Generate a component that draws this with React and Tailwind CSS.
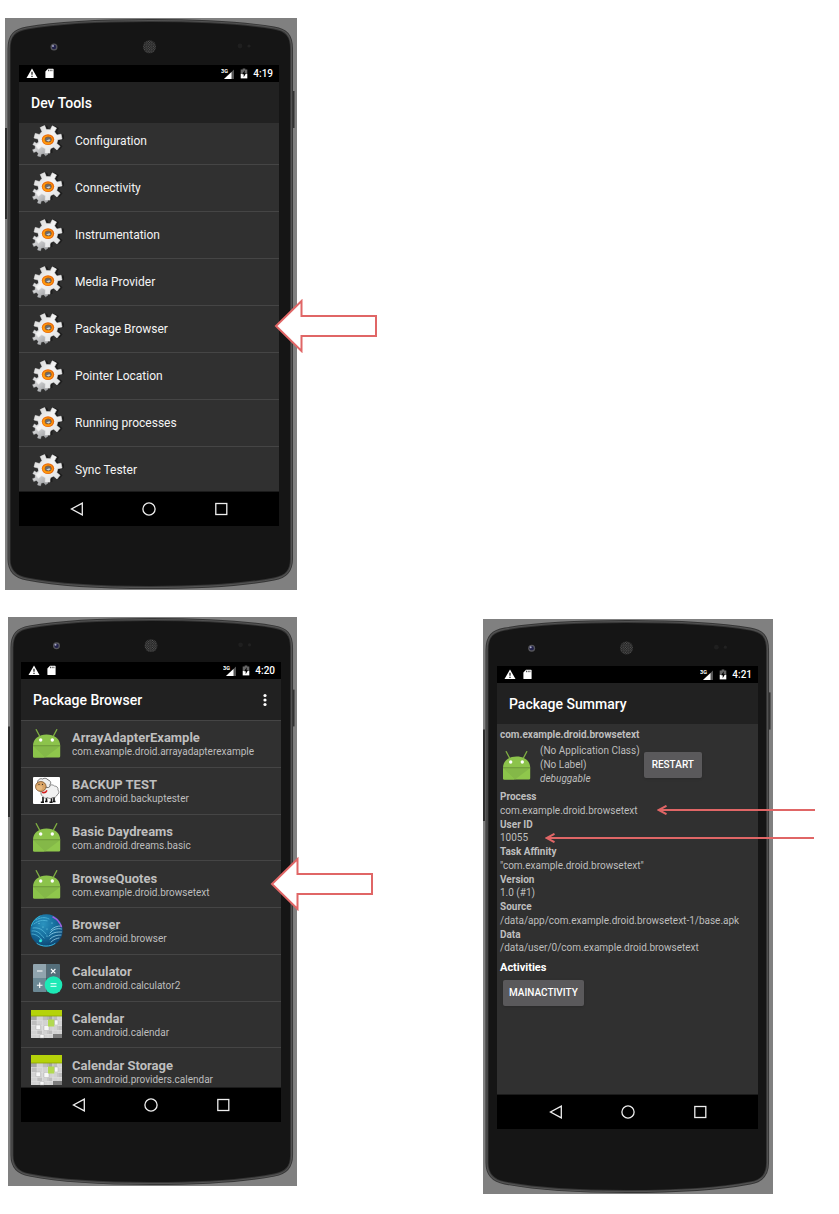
import React from 'react';

function gearPath(cx, cy, inner, outer, teeth, start) {
  const step = (Math.PI * 2) / teeth;
  const at = (r, a) => `${(cx + r * Math.cos(a)).toFixed(2)} ${(cy + r * Math.sin(a)).toFixed(2)}`;
  const parts = [];
  for (let i = 0; i < teeth; i += 1) {
    const a = start + i * step;
    parts.push(
      at(inner, a - step * 0.27),
      at(outer, a - step * 0.19),
      at(outer, a + step * 0.19),
      at(inner, a + step * 0.27),
    );
  }
  return `M${parts.join('L')}Z`;
}

const FRONT_GEAR = gearPath(17, 14.2, 9.8, 14, 7, -1.09);
const BACK_GEAR = gearPath(10.5, 22.6, 6.5, 9.2, 7, -0.85);

function GearIcon() {
  return (
    <svg viewBox="0 0 33 33" className="size-[33px] shrink-0" aria-hidden="true">
      <defs>
        <linearGradient id="gear-front" x1="0" y1="0" x2="1" y2="1">
          <stop offset="0" stopColor="#d2d2d2" />
          <stop offset="0.45" stopColor="#f4f4f4" />
          <stop offset="1" stopColor="#dcdee0" />
        </linearGradient>
        <linearGradient id="gear-back" x1="0" y1="0" x2="1" y2="1">
          <stop offset="0" stopColor="#f0f0f0" />
          <stop offset="0.5" stopColor="#c4c5c7" />
          <stop offset="1" stopColor="#8d8f92" />
        </linearGradient>
      </defs>
      <path d={FRONT_GEAR} transform="translate(2.500 0)" fill="#141414" opacity="0.7" />
      <path d={BACK_GEAR} fill="url(#gear-back)" strokeLinejoin="round" stroke="#bcbdbf" strokeWidth="0.4" />
      <path d={FRONT_GEAR} fill="url(#gear-front)" stroke="#e6e6e6" strokeWidth="0.6" strokeLinejoin="round" />
      <ellipse cx="17" cy="14.6" rx="6.200" ry="5.400" fill="#e8690a" />
      <ellipse cx="16.700" cy="14.800" rx="5.200" ry="4.400" fill="#ff980c" />
      <ellipse cx="17.200" cy="14.400" rx="3.500" ry="2.900" fill="#a3581a" />
      <ellipse cx="17.200" cy="14.500" rx="2.900" ry="2.200" fill="#686d72" />
      <path d="M15.200 15.400l3.200-1.200 1.200 1-2 1.200z" fill="#cfd5d8" />
    </svg>
  );
}

function AndroidIcon() {
  return (
    <svg viewBox="0 0 33 33" className="size-[33px] shrink-0" aria-hidden="true">
      <path d="M6.2 2.600l3.200 6M26.800 2.600l-3.200 6" stroke="#7fae42" strokeWidth="1.200" strokeLinecap="round" />
      <path d="M3 18.800C3 11.500 9 7.500 16.500 7.500S30.200 11.500 30.200 18.800z" fill="#8cc34b" />
      <path d="M3 18.800h27.200v10.400a1.300 1.300 0 0 1-1.300 1.300H4.300A1.300 1.300 0 0 1 3 29.200z" fill="#8fc74c" />
      <path d="M3 19l11.500 11.500H4.300A1.300 1.300 0 0 1 3 29.200z" fill="#8bc34a" />
      <path d="M3 19h27.200L15 30.500z" fill="#84b848" />
      <path d="M3 18.800h27.200" stroke="#6f9c3b" strokeWidth="0.900" />
      <circle cx="10.700" cy="13" r="1.700" fill="#fff" />
      <circle cx="22.300" cy="13" r="1.700" fill="#fff" />
    </svg>
  );
}

function SheepIcon() {
  return (
    <svg viewBox="0 0 33 33" className="size-[33px] shrink-0" aria-hidden="true">
      <rect x="3" y="3" width="27" height="27" rx="1" fill="#fff" />
      <path d="M13 23v5M16.500 23v4.500M21.500 23v5M24 22v5.500" stroke="#111" strokeWidth="1.600" />
      <path d="M10.800 28.300h3.200M15 27.600h2.500M19.500 28.300h3.200M23 27.600h2.500" stroke="#111" strokeWidth="1.500" />
      <path
        d="M12 15c-2 4-1 6.500 1.500 8 1 1.500 3 1.500 4 .5 1.500 1.300 4 1.300 5 0 2.500.5 4-1 4.500-2.500 2-1 2.500-3.500 1-5 .5-2.500-1.500-4-3.500-4-1.500-1.500-4-1.500-5-.5z"
        fill="#f1f1f1"
        stroke="#666"
        strokeWidth="0.700"
      />
      <path d="M7.500 8.500c0-3 3-4.500 5-3.500 2-1.500 5-.5 5.500 1 2.500.5 3.500 3 2 4.500.5 2-1 3.500-3 3z" fill="#efefef" stroke="#444" strokeWidth="0.700" />
      <ellipse cx="10.800" cy="12.500" rx="5.300" ry="5" fill="#d9a365" stroke="#6b4520" strokeWidth="0.700" />
      <ellipse cx="9.500" cy="13.800" rx="3" ry="2.300" fill="#e6b87e" />
      <circle cx="9" cy="10.300" r="0.600" fill="#222" />
      <circle cx="12.500" cy="10.300" r="0.600" fill="#222" />
      <path d="M12 18.300c2 .8 4 0 5-2" stroke="#d62020" strokeWidth="1.600" fill="none" />
    </svg>
  );
}

function GlobeIcon() {
  return (
    <svg viewBox="0 0 33 33" className="size-[33px] shrink-0" aria-hidden="true">
      <defs>
        <radialGradient id="globe-fill" cx="0.400" cy="0.300" r="0.700">
          <stop offset="0" stopColor="#2b93bf" />
          <stop offset="0.550" stopColor="#156c9c" />
          <stop offset="1" stopColor="#0e4673" />
        </radialGradient>
      </defs>
      <circle cx="16.500" cy="16.500" r="16.200" fill="url(#globe-fill)" />
      <g fill="none" strokeWidth="0.700" strokeLinecap="round">
        <path d="M6 6c5-3 9-3 13-1M4 10c5-4 9-4 14-3" stroke="#5fc4e4" strokeDasharray="1.500 1" />
        <path d="M20 19c3-4 7-5 11.500-4M19 22c4-4 8-4 12.500-4M20 25c3-3 7-4 11-4M21 28c3-3 6-3.500 8-4M21 16c3-3 6-4 10-4" stroke="#a6e0f4" />
        <path d="M2 17c5-1 9 3 12 7M2 20c4 0 8 3 10 6M3 14c6-1 10 2 13 6" stroke="#62c4e4" />
        <path d="M23 3c4 2 7 5.500 8.500 10" stroke="#a85be0" strokeWidth="1.500" strokeDasharray="2.500 1" />
        <path d="M10 2c-4 2-7 5-8.500 9.500" stroke="#38d0ee" />
        <path d="M7 29.500c5 3.500 13 3.500 18 0" stroke="#38b6dc" strokeWidth="1" />
      </g>
      <g fill="#8fe6f4">
        <circle cx="10.500" cy="26.700" r="1.500" fill="#2ff0dc" />
        <circle cx="13" cy="13" r="0.500" />
        <circle cx="17" cy="15" r="0.500" />
        <circle cx="17" cy="22" r="0.600" />
        <circle cx="22" cy="9" r="0.600" />
        <circle cx="9" cy="9.500" r="0.500" />
      </g>
    </svg>
  );
}

function CalculatorIcon() {
  return (
    <svg viewBox="0 0 33 33" className="size-[33px] shrink-0" aria-hidden="true">
      <path d="M4 3h12.500v14H3V4a1 1 0 0 1 1-1z" fill="#90a4ae" />
      <path d="M16.500 3H29a1 1 0 0 1 1 1v13H16.500z" fill="#546e7a" />
      <path d="M3 17h13.500v14H4a1 1 0 0 1-1-1z" fill="#6b8894" />
      <path d="M16.500 17H30v13a1 1 0 0 1-1 1H16.500z" fill="#455a64" />
      <path d="M7 10h5.500M21 8l4.400 4.400M25.400 8L21 12.400M9.700 21.500v5.600M6.900 24.300h5.600" stroke="#fff" strokeWidth="1.100" />
      <circle cx="23.500" cy="24" r="8.800" fill="#1de9b6" />
      <path d="M20.500 22.700h6M20.500 25.300h6" stroke="#c7fff0" strokeWidth="1.200" />
    </svg>
  );
}

function CalendarIcon({ tall }) {
  const top = tall ? 0 : 2;
  const head = tall ? 8 : 6;
  return (
    <svg viewBox="0 0 33 33" className="size-[33px] shrink-0" aria-hidden="true">
      <rect x="1" y={top} width="31" height={30 - top} fill="#d2d2d2" />
      <path d="M2 12h5v5H2zM12 8h5v5h-5zM22 8h5v5h-5zM7 22h5v4H7zM17 22h5v4h-5zM27 18h5v4h-5z" fill="#bdbdbd" />
      <path d="M1 8h6v4H1zM17 8h5v4h-5z" fill="#a6a6a6" />
      <path d="M1 12.500h31M1 17.500h31M1 22.500h31M1 26.500h31M7 8v22M12.500 8v22M18 8v22M23 8v22M28 8v22" stroke="#e2e2e2" strokeWidth="0.500" />
      <path d="M23 26h9v4h-9z" fill="#7c7c7c" />
      <rect x="1" y={top} width="31" height={head} fill="#b5d20a" />
      <path d={`M1 ${top + head}h31`} stroke="#8aa300" strokeWidth="0.800" />
      <path d="M6 17h4.500v4.500H6zM24.500 12h3.500v5h-3.500zM14 17.500h5v5h-5zM10 26.500h4v3.500h-4z" fill="#f7f7f7" stroke="#a5a5a5" strokeWidth="0.400" />
      <rect x="18" y="11.500" width="6.300" height="7" fill="#b2d951" />
    </svg>
  );
}

function StatusBar({ time }) {
  return (
    <div className="flex h-[17px] items-center justify-between bg-black pl-[7px] pr-1.5 text-white">
      <div className="flex items-center gap-[7px]">
        <svg viewBox="0 0 12 11" className="h-[11px] w-3" aria-hidden="true">
          <path d="M6 0.500L11.500 10H0.500z" fill="#fff" />
          <path d="M6 3.800v3M6 7.700v1.200" stroke="#000" strokeWidth="1.100" />
        </svg>
        <svg viewBox="0 0 9 11" className="h-[11px] w-[9px]" aria-hidden="true">
          <path d="M3 0.700h5a.6.6 0 0 1 .6.6v8.100a.6.6 0 0 1-.6.6H1a.6.6 0 0 1-.6-.6V3.400z" fill="#fff" />
          <path d="M3.500 1.700v1.500M5.200 1.700v1.500M6.900 1.700v1.500" stroke="#000" strokeWidth="0.700" />
        </svg>
      </div>
      <div className="flex items-center">
        <svg viewBox="0 0 14 12" className="h-3 w-3.5" aria-hidden="true">
          <path d="M13 1.500V11H3z" fill="#555" />
          <path d="M10.500 4V11H3z" fill="#fff" />
          <text x="0" y="5" fontSize="5.500" fontWeight="700" fill="#fff" fontFamily="Roboto, sans-serif">3G</text>
        </svg>
        <svg viewBox="0 0 8 11" className="ml-[5px] h-[11px] w-2" aria-hidden="true">
          <path d="M2.700 0.400h2.600v1h2v4.600H0.700V1.400h2z" fill="#666" />
          <path d="M0.700 6h6.600v4.400H0.700z" fill="#fff" />
          <path d="M4.700 2.200L2.200 6.200h1.500v3L6 5.200H4.600z" fill="#000" />
        </svg>
        <time className="ml-[5px] text-[10px] font-medium leading-4">{time}</time>
      </div>
    </div>
  );
}

function NavBar() {
  return (
    <nav className="flex h-[35px] items-center justify-center gap-[58px] border-t border-[#1b1b1b] bg-black" aria-label="System">
      <button type="button" aria-label="Back">
        <svg viewBox="0 0 14 14" className="block size-3.5">
          <path d="M12.300 1.200v11.600L1.500 7z" fill="none" stroke="#eee" strokeWidth="1.300" />
        </svg>
      </button>
      <button type="button" aria-label="Home">
        <svg viewBox="0 0 14 14" className="block size-3.5">
          <circle cx="7" cy="7" r="6.100" fill="none" stroke="#eee" strokeWidth="1.300" />
        </svg>
      </button>
      <button type="button" aria-label="Overview">
        <svg viewBox="0 0 14 14" className="block size-3.5">
          <rect x="1.800" y="1.500" width="11" height="11" fill="none" stroke="#eee" strokeWidth="1.300" />
        </svg>
      </button>
    </nav>
  );
}

const BODY =
  'M4 31C4 17 10 12 22 10C50 5 95 2.500 145 2.500S240 5 269 10C281 12 286.500 17 286.500 31V541C286.500 553 281 559 269 561C240 566.500 195 569.500 145 569.500S50 566.500 22 561C10 559 4 553 4 541Z';

function Bezel() {
  return (
    <svg
      viewBox="0 0 292 572"
      preserveAspectRatio="none"
      className="absolute inset-0 -z-10 size-full"
      aria-hidden="true"
    >
      <defs>
        <pattern id="grille" width="2.400" height="2.400" patternUnits="userSpaceOnUse">
          <rect width="2.400" height="2.400" fill="#1c1c1c" />
          <circle cx="0.600" cy="0.600" r="0.550" fill="#6a6a6a" />
          <circle cx="1.800" cy="1.800" r="0.550" fill="#6a6a6a" />
        </pattern>
      </defs>
      <path d="M0 110h2v91H0z" fill="#2e2e2e" />
      <path d="M287 73h2.500v37H287z" fill="#333" />
      <path d={BODY} fill="#151515" stroke="#363636" strokeWidth="3" />
      <path d={BODY} fill="none" stroke="#525252" strokeWidth="1.200" />
      <circle cx="49" cy="29" r="3.500" fill="#55555a" />
      <circle cx="49" cy="29" r="2.200" fill="#22224a" />
      <circle cx="48" cy="28" r="1" fill="#a9a9c8" />
      <circle cx="144.500" cy="28.800" r="6.500" fill="url(#grille)" />
      <circle cx="235" cy="28" r="2.400" fill="#1f1f1f" />
      <circle cx="244" cy="28" r="1.600" fill="#222" />
    </svg>
  );
}

function Phone({ className, title, time, action, children }) {
  return (
    <section className={`relative isolate shrink-0 bg-[#808080] ${className}`} aria-label={title}>
      <Bezel />
      <StatusBar time={time} />
      <header className="flex h-[41px] items-center justify-between bg-[#212121] pl-3 pr-2 text-white">
        <h2 className="text-[14px] font-medium leading-5">{title}</h2>
        {action}
      </header>
      {children}
      <NavBar />
    </section>
  );
}

function BlockArrow({ className }) {
  return (
    <svg viewBox="0 0 104 54" className={`absolute h-[54px] w-[104px] ${className}`} aria-hidden="true">
      <path d="M2 27L27.500 2V17H102V37H27.500V52Z" fill="#fff" stroke="#e06666" strokeWidth="2" />
    </svg>
  );
}

function LineArrow({ className }) {
  return (
    <div className={`absolute flex items-center ${className}`} aria-hidden="true">
      <svg viewBox="0 0 10 10" className="size-2.5 shrink-0">
        <path d="M9.500 0.800L1.500 5l8 4.200M1.500 5H10" fill="none" stroke="#e06666" strokeWidth="2" />
      </svg>
      <span className="h-0.5 flex-1 bg-[#e06666]" />
    </div>
  );
}

const TOOLS = [
  'Configuration',
  'Connectivity',
  'Instrumentation',
  'Media Provider',
  'Package Browser',
  'Pointer Location',
  'Running processes',
  'Sync Tester',
];

const PACKAGES = [
  { name: 'ArrayAdapterExample', id: 'com.example.droid.arrayadapterexample', icon: <AndroidIcon /> },
  { name: 'BACKUP TEST', id: 'com.android.backuptester', icon: <SheepIcon /> },
  { name: 'Basic Daydreams', id: 'com.android.dreams.basic', icon: <AndroidIcon /> },
  { name: 'BrowseQuotes', id: 'com.example.droid.browsetext', icon: <AndroidIcon /> },
  { name: 'Browser', id: 'com.android.browser', icon: <GlobeIcon /> },
  { name: 'Calculator', id: 'com.android.calculator2', icon: <CalculatorIcon /> },
  { name: 'Calendar', id: 'com.android.calendar', icon: <CalendarIcon /> },
  { name: 'Calendar Storage', id: 'com.android.providers.calendar', icon: <CalendarIcon tall /> },
];

const DETAILS = [
  ['Process', 'com.example.droid.browsetext'],
  ['User ID', '10055'],
  ['Task Affinity', '"com.example.droid.browsetext"'],
  ['Version', '1.0 (#1)'],
  ['Source', '/data/app/com.example.droid.browsetext-1/base.apk'],
  ['Data', '/data/user/0/com.example.droid.browsetext'],
];

function DevTools() {
  return (
    <div className="h-[368px] overflow-hidden bg-[#303030]">
      <ul className="-mt-[5px]">
        {TOOLS.map((tool) => (
          <li key={tool} className="border-b border-[#454545]">
            <button type="button" className="flex h-[46px] w-full items-center gap-[11px] pl-3 text-left text-[12px] text-[#f4f4f4]">
              <GearIcon />
              {tool}
            </button>
          </li>
        ))}
      </ul>
    </div>
  );
}

function PackageList() {
  return (
    <div className="h-[367px] overflow-hidden border-t border-[#454545] bg-[#303030]">
      <ul className="grid h-[374px] auto-rows-fr">
        {PACKAGES.map((pkg) => (
          <li key={pkg.id} className="border-b border-[#454545]">
            <button type="button" className="flex h-full w-full items-center gap-[9px] pl-[9px] text-left text-[#bebebe]">
              {pkg.icon}
              <span className="pt-[3px]">
                <span className="block text-[13px] font-bold leading-[14px]">{pkg.name}</span>
                <span className="block text-[10px] leading-[14px]">{pkg.id}</span>
              </span>
            </button>
          </li>
        ))}
      </ul>
    </div>
  );
}

function PackageSummary() {
  return (
    <div className="h-[370px] bg-[#303030] px-[3px] pt-1 text-[10px] leading-[14px] text-[#bebebe]">
      <p className="font-bold">com.example.droid.browsetext</p>
      <div className="mt-0.5 flex items-center gap-1">
        <AndroidIcon />
        <div className="ml-[3px]">
          <p>(No Application Class)</p>
          <p>(No Label)</p>
          <p className="italic">debuggable</p>
        </div>
        <button type="button" className="rounded-xs bg-[#5a595b] px-2 py-1.5 font-medium text-white shadow-sm">
          RESTART
        </button>
      </div>
      <dl className="mt-1 grid h-[165px] auto-rows-fr">
        {DETAILS.map(([label, value]) => (
          <React.Fragment key={label}>
            <dt className="font-bold">{label}</dt>
            <dd>{value}</dd>
          </React.Fragment>
        ))}
      </dl>
      <h3 className="mt-[5px] text-[11px] font-bold leading-4 text-white">Activities</h3>
      <button type="button" className="ml-[3px] mt-1 rounded-xs bg-[#5a595b] px-1.5 py-1.5 font-medium text-white shadow-sm">
        MAINACTIVITY
      </button>
    </div>
  );
}

export default function App() {
  return (
    <main className="flex flex-col gap-[27px] bg-white pb-5 pt-[18px] font-[Roboto,sans-serif]">
      <div className="flex pl-[5px]">
        <Phone title="Dev Tools" time="4:19" className="w-[292px] pb-16 pl-3.5 pr-[18px] pt-[47px]">
          <DevTools />
          <BlockArrow className="left-[269px] top-[281px]" />
        </Phone>
      </div>
      <div className="flex items-start justify-between pl-2 pr-[66px]">
        <Phone
          title="Package Browser"
          time="4:20"
          className="w-[289px] pb-16 pl-[13px] pr-4 pt-[45px]"
          action={
            <button type="button" aria-label="More options">
              <svg viewBox="0 0 16 16" className="block size-4" fill="#fff">
                <circle cx="8" cy="3.500" r="1.600" />
                <circle cx="8" cy="8" r="1.600" />
                <circle cx="8" cy="12.500" r="1.600" />
              </svg>
            </button>
          }
        >
          <PackageList />
          <BlockArrow className="left-[262px] top-[240px]" />
        </Phone>
        <Phone title="Package Summary" time="4:21" className="mt-0.5 w-[290px] pb-[65px] pl-3.5 pr-[15px] pt-[47px]">
          <PackageSummary />
          <LineArrow className="-right-[42px] left-[174px] top-[186px]" />
          <LineArrow className="-right-[41px] left-[62px] top-[214px]" />
        </Phone>
      </div>
    </main>
  );
}
